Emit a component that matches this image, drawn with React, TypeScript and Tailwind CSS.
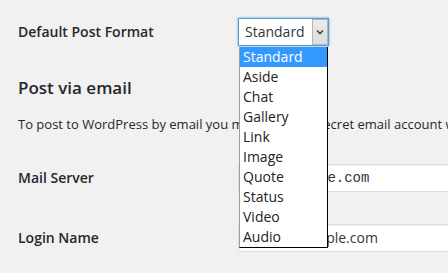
import React from "react";

const items = ["Standard", "Aside", "Chat", "Gallery", "Link", "Image", "Quote", "Status", "Video", "Audio"];

export default function App() {
  return (
    <div
      className="relative w-[448px] h-[273px] overflow-hidden bg-[#f1f1f1] text-[#23282d]"
      style={{ fontFamily: '"Open Sans", "Noto Sans", sans-serif' }}
    >
      <div className="pt-[18px]">
        <div className="flex h-[28px]">
          <div className="w-[238px] shrink-0 pl-[18px] text-[14px] font-semibold leading-[28px]">Default Post Format</div>
          <div className="flex h-[28px] w-[91px] border border-[#5b9dd9] bg-white shadow-[0_0_2px_rgba(30,140,190,0.8)]">
            <div className="flex-1 pl-[6px] text-[14px] leading-[26px] text-[#32373c]">Standard</div>
            <div className="flex w-[16px] items-center justify-center border border-[#b5b5b5] bg-gradient-to-b from-[#ececec] to-[#dcdcdc]">
              <svg width="8" height="6" viewBox="0 0 8 6">
                <path d="M1 1.5 L4 4.5 L7 1.5" fill="none" stroke="#444" strokeWidth="1.6" />
              </svg>
            </div>
          </div>
        </div>

        <h2 className="mt-[30px] pl-[18px] text-[17px] font-semibold leading-[24px]">Post via email</h2>

        <p className="mt-[14px] pl-[18px] text-[13px] leading-[20px] whitespace-nowrap">
          To post to WordPress by email you must set up a secret email account with POP3 access.
        </p>

        <div className="mt-[30px] flex h-[28px]">
          <div className="w-[238px] shrink-0 pl-[18px] text-[14px] font-semibold leading-[28px]">Mail Server</div>
          <div className="h-[28px] w-[330px] shrink-0 overflow-hidden border border-[#ddd] bg-white pl-[4px] shadow-[inset_0_1px_2px_rgba(0,0,0,0.07)]">
            <div
              className="-ml-[8px] text-[14px] leading-[26px] text-[#32373c] whitespace-nowrap"
              style={{ fontFamily: '"Liberation Mono", monospace' }}
            >
              mail.example.com
            </div>
          </div>
        </div>

        <div className="mt-[32px] flex h-[28px]">
          <div className="w-[238px] shrink-0 pl-[18px] text-[14px] font-semibold leading-[28px]">Login Name</div>
          <div className="h-[28px] w-[330px] shrink-0 border border-[#ddd] bg-white pl-[7px] text-[14px] leading-[26px] text-[#32373c] shadow-[inset_0_1px_2px_rgba(0,0,0,0.07)] whitespace-nowrap">
            login@example.com
          </div>
        </div>
      </div>

      <ul className="absolute left-[239px] top-[47px] w-[89px] border-l border-l-[#a0a0a0] border-r border-r-black border-b border-b-black bg-white">
        {items.map((it, i) => (
          <li
            key={it}
            className={
              "h-[20px] pl-[3px] text-[14px] leading-[20px] " +
              (i === 0 ? "bg-[#3399ff] text-white" : "text-[#222]")
            }
          >
            {it}
          </li>
        ))}
      </ul>
    </div>
  );
}
